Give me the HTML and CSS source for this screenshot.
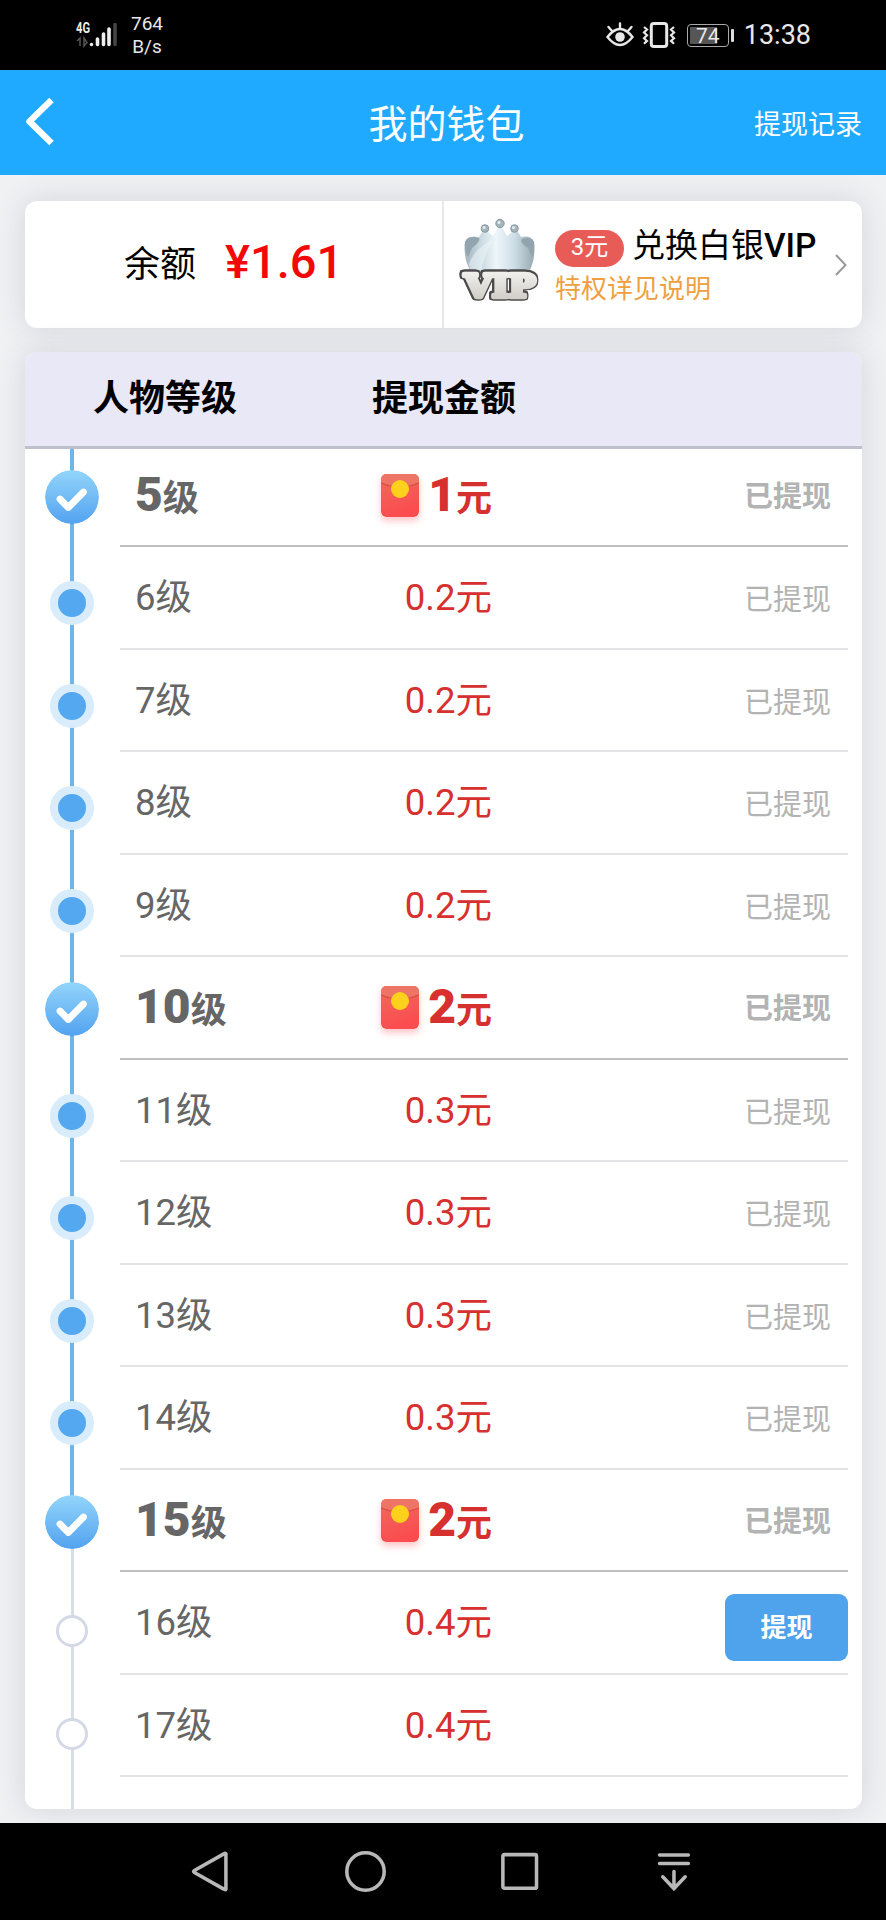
FILE: index.html
```html
<!DOCTYPE html>
<html lang="zh-CN">
<head>
<meta charset="utf-8">
<title>我的钱包</title>
<link rel="stylesheet" href="styles.css">
</head>
<body>
<svg class="defs" width="0" height="0" aria-hidden="true">
  <defs>
    <linearGradient id="badge" x1="0" y1="0" x2="0" y2="1"><stop offset="0" stop-color="#93d5fb"/><stop offset="1" stop-color="#52a2ef"/></linearGradient>
    <linearGradient id="red" x1="0" y1="0" x2="0.3" y2="1"><stop offset="0" stop-color="#ee6c5c"/><stop offset="1" stop-color="#fb4c50"/></linearGradient>
    <linearGradient id="silver" x1="0" y1="0" x2="1" y2="0"><stop offset="0" stop-color="#a3b4bc"/><stop offset=".22" stop-color="#c8d8df"/><stop offset=".45" stop-color="#edf6fa"/><stop offset=".7" stop-color="#cfdfe7"/><stop offset="1" stop-color="#98a8b0"/></linearGradient>
    <linearGradient id="letters" x1="0" y1="0" x2="0" y2="1"><stop offset="0" stop-color="#f6f5f3"/><stop offset="1" stop-color="#cbc7c1"/></linearGradient>
    <symbol id="check" viewBox="0 0 54 54"><circle cx="27" cy="27" r="27" fill="url(#badge)"/><path d="M15 29 23.300 37.500 38.500 22" fill="none" stroke="#fff" stroke-width="6.800" stroke-linecap="round" stroke-linejoin="round"/></symbol>
    <symbol id="packet" viewBox="0 0 38 43"><rect width="38" height="43" rx="5" fill="url(#red)"/><path d="M0 9V5Q0 0 5 0H33Q38 0 38 5V9Q19 17 0 9Z" fill="#ee7565"/><path d="M0 9Q19 17 38 9" fill="none" stroke="#dc5148" stroke-width="1.500"/><circle cx="19" cy="15" r="9" fill="#fdd11b"/></symbol>
  </defs>
</svg>
<div class="phone">
  <div class="status">
    <svg class="signal" width="42" height="28" viewBox="0 0 42 28">
      <text x="0" y="12" class="signal-label" textLength="14" lengthAdjust="spacingAndGlyphs">4G</text>
      <g stroke-width="3.600" stroke-linecap="round" stroke="#eee"><path d="M15.500 23.500v0M21.500 18v5.500M27.500 13v10.500M33 8v15.500"/><path d="M39 3.500v20" stroke="#444"/></g>
      <path d="M1 20l3-3v8M8 17v8l3-3.500z" fill="none" stroke="#555" stroke-width="1.500"/>
    </svg>
    <div class="speed">764<br>B/s</div>
    <div class="status-right">
      <svg width="28" height="26" viewBox="0 0 28 26" fill="none" stroke="#e8e8e8" stroke-width="2.400" stroke-linecap="round"><path d="M1.500 15Q14-1 26.500 15Q14 31 1.500 15Z"/><circle cx="14" cy="15" r="4.800" fill="#e8e8e8" stroke="none"/><path d="M14 6V1.500M6 9 2.500 5M22 9l3.500-4"/></svg>
      <svg class="vibrate" width="34" height="26" viewBox="0 0 34 26" fill="none" stroke="#e8e8e8"><rect x="9.300" y="1.500" width="15.400" height="23" rx="2.500" stroke-width="3"/><path d="M2 5l3 2.500-3 3 3 2.700-3 3 3 2.700-3 2.800M32 5l-3 2.500 3 3-3 2.700 3 3-3 2.700 3 2.800" stroke-width="2.200"/></svg>
      <div class="battery"><span>74</span></div><i class="battery-tip"></i>
      <time>13:38</time>
    </div>
  </div>
  <header class="topbar">
    <svg class="back" width="31" height="50" viewBox="0 0 31 50"><path d="M27.500 3 5.500 24.500 27.500 46" fill="none" stroke="#fff" stroke-width="6.500" stroke-linejoin="round"/></svg>
    <h1>我的钱包</h1>
    <a class="record">提现记录</a>
  </header>
  <main>
    <section class="card summary">
      <div class="balance"><span>余额</span><b>¥1.61</b></div>
      <div class="vip">
        <svg class="crown" width="80" height="88" viewBox="0 0 80 88">
          <path d="M5 25Q8 18 19 20L22 15H28L33 19 38 10H42L47 19 52 15H58L61 20Q71 18 74 25Q76 42 69 55H11Q3 42 5 25Z" fill="url(#silver)"/>
          <path d="M5 25Q8 18 19 21Q21 24 12 31L8 40Q4 34 5 25ZM74 25Q71 19 62 22Q59 25 68 31L72 40Q75 34 74 25Z" fill="#92a4ad"/>
          <path d="M9 47Q14 31 37 20Q24 34 21 55H11Z" fill="#e9f4f8" opacity=".6"/>
          <g fill="#a6b5bc" stroke="#8797a0"><circle cx="25" cy="11.500" r="3.800"/><circle cx="40" cy="6.500" r="4.200"/><circle cx="54.500" cy="11.500" r="3.800"/></g>
          <g fill="#e4edf0"><circle cx="24" cy="10.500" r="1.500"/><circle cx="39" cy="5.500" r="1.600"/><circle cx="53.500" cy="10.500" r="1.500"/></g>
          <text x="4.500" y="80" class="vip-letters" textLength="71" lengthAdjust="spacingAndGlyphs">VIP</text>
        </svg>
        <div class="vip-copy">
          <div class="vip-line"><span class="pill">3元</span><span class="vip-title">兑换白银<b>VIP</b></span></div>
          <div class="vip-note">特权详见说明</div>
        </div>
        <svg class="chevron" width="14" height="24" viewBox="0 0 14 24"><path d="M2 2 11.500 12 2 22" fill="none" stroke="#999" stroke-width="2"/></svg>
      </div>
    </section>
    <section class="card levels">
      <div class="levels-head"><span>人物等级</span><span>提现金额</span></div>
      <div class="list">
        <div class="row big"><div class="rail"><svg class="node"><use href="#check"/></svg></div><div class="cell"><div class="level"><b>5</b>级</div><div class="amount"><svg class="packet"><use href="#packet"/></svg><span><b>1</b>元</span></div><div class="state">已提现</div></div></div>
        <div class="row"><div class="rail"><i class="node"></i></div><div class="cell"><div class="level">6级</div><div class="amount">0.2元</div><div class="state">已提现</div></div></div>
        <div class="row"><div class="rail"><i class="node"></i></div><div class="cell"><div class="level">7级</div><div class="amount">0.2元</div><div class="state">已提现</div></div></div>
        <div class="row"><div class="rail"><i class="node"></i></div><div class="cell"><div class="level">8级</div><div class="amount">0.2元</div><div class="state">已提现</div></div></div>
        <div class="row"><div class="rail"><i class="node"></i></div><div class="cell"><div class="level">9级</div><div class="amount">0.2元</div><div class="state">已提现</div></div></div>
        <div class="row big"><div class="rail"><svg class="node"><use href="#check"/></svg></div><div class="cell"><div class="level"><b>10</b>级</div><div class="amount"><svg class="packet"><use href="#packet"/></svg><span><b>2</b>元</span></div><div class="state">已提现</div></div></div>
        <div class="row"><div class="rail"><i class="node"></i></div><div class="cell"><div class="level">11级</div><div class="amount">0.3元</div><div class="state">已提现</div></div></div>
        <div class="row"><div class="rail"><i class="node"></i></div><div class="cell"><div class="level">12级</div><div class="amount">0.3元</div><div class="state">已提现</div></div></div>
        <div class="row"><div class="rail"><i class="node"></i></div><div class="cell"><div class="level">13级</div><div class="amount">0.3元</div><div class="state">已提现</div></div></div>
        <div class="row"><div class="rail"><i class="node"></i></div><div class="cell"><div class="level">14级</div><div class="amount">0.3元</div><div class="state">已提现</div></div></div>
        <div class="row big last"><div class="rail"><svg class="node"><use href="#check"/></svg></div><div class="cell"><div class="level"><b>15</b>级</div><div class="amount"><svg class="packet"><use href="#packet"/></svg><span><b>2</b>元</span></div><div class="state">已提现</div></div></div>
        <div class="row todo"><div class="rail"><i class="node"></i></div><div class="cell"><div class="level">16级</div><div class="amount">0.4元</div><button class="withdraw">提现</button></div></div>
        <div class="row todo"><div class="rail"><i class="node"></i></div><div class="cell"><div class="level">17级</div><div class="amount">0.4元</div></div></div>
        <div class="row todo tail"><div class="rail"></div></div>
      </div>
    </section>
  </main>
  <nav class="nav">
    <svg viewBox="0 0 44 44"><path d="M35.500 5.500V38.500Q35 39.500 33.500 38.500L6 23Q4.500 22 6 21L33.500 5.500Q35 4.500 35.500 5.500Z"/></svg>
    <svg viewBox="0 0 44 44"><circle cx="22" cy="22" r="17.500"/></svg>
    <svg viewBox="0 0 44 44"><rect x="5.500" y="6.200" width="31.500" height="31.500" rx="1.500"/></svg>
    <svg viewBox="0 0 44 44" stroke-linecap="round"><path d="M8 6.500H35M8 14.500H35M21.500 22V38M11 27l10.500 11L32 27"/></svg>
  </nav>
</div>
</body>
</html>
```

FILE: styles.css
```css
* { box-sizing: border-box; }
body { margin: 0; font-family: Roboto, "Noto Sans CJK SC", sans-serif; }
svg { display: block; flex: none; }
.defs { position: absolute; }
.phone { width: 886px; height: 1920px; overflow: hidden; display: flex; flex-direction: column; background: #f0f1f3; }

.status { height: 70px; flex: none; background: #000; color: #e8e8e8; display: flex; align-items: flex-start; padding-left: 76px; }
.signal { margin-top: 21px; }
.signal-label { font-size: 14px; font-weight: 700; fill: #eee; }
.speed { margin: 13px 0 0 12px; width: 34px; font-size: 19px; line-height: 22.5px; text-align: center; }
.status-right { margin-left: auto; padding: 21px 75px 0 0; display: flex; align-items: center; height: 49px; }
.vibrate { margin-left: 8px; }
.battery { margin-left: 11px; width: 42px; height: 23px; border: 1.500px solid #aaa; border-radius: 4px; padding: 2px; }
.battery span { display: block; height: 17px; line-height: 18px; font-size: 21px; text-align: center; background: linear-gradient(90deg, #555 74%, transparent 74%); }
.battery-tip { width: 3px; height: 13px; margin-left: 2px; background: #ddd; border-radius: 1px; }
.status time { margin-left: 10px; font-size: 27px; }

.topbar { height: 105px; flex: none; background: #20aaff; color: #fff; display: grid; grid-template-columns: 1fr auto 1fr; align-items: center; padding: 0 24px; }
.back { margin-bottom: 1px; }
.topbar h1 { margin: 0; padding: 4px 0 0 7px; font-size: 39px; font-weight: 400; line-height: 56px; }
.record { justify-self: end; padding-top: 4px; font-size: 27px; line-height: 40px; }

main { flex: 1; min-height: 0; padding: 26px 24px 14px 25px; display: flex; flex-direction: column; gap: 24px; }
.card { background: #fff; border-radius: 12px; box-shadow: 0 0 30px rgba(70, 70, 100, .16); }
.summary { height: 127px; display: flex; flex: none; }
.balance { width: 419px; border-right: 2px solid #e8e8eb; padding: 0 0 7px 99px; display: flex; align-items: center; gap: 29px; font-size: 36px; }
.balance b { font-size: 47px; font-weight: 500; color: #f40707; }
.vip { flex: 1; display: flex; align-items: flex-start; padding: 16px 14px 0 16px; }
.crown { overflow: visible; }
.vip-letters { font-family: "DejaVu Serif", serif; font-weight: 700; font-size: 31px; fill: url(#letters); stroke: url(#letters); stroke-width: 4.500px; stroke-linejoin: round; filter: drop-shadow(1.200px 0 0 #4c4a4a) drop-shadow(-1.200px 0 0 #4c4a4a) drop-shadow(0 1.200px 0 #4c4a4a) drop-shadow(0 -1.200px 0 #4c4a4a); }
.vip-copy { margin-left: 15px; }
.vip-line { display: flex; align-items: center; height: 54px; gap: 8px; padding-top: 9px; }
.pill { width: 69px; height: 37px; border-radius: 19px; background: #e85c58; color: #fff; font-size: 24px; line-height: 35px; text-align: center; }
.vip-title { font-size: 33px; line-height: 48px; margin-top: -5px; white-space: nowrap; }
.vip-title b { font-size: 33.5px; font-weight: 500; }
.vip-note { font-size: 26px; line-height: 36px; color: #ef9f40; }
.chevron { margin: 36px 0 0 auto; }

.levels { flex: 1; min-height: 0; overflow: hidden; display: flex; flex-direction: column; }
.levels-head { height: 97px; flex: none; background: #e8e8f7; border-bottom: 3px solid #bec0cb; display: grid; grid-template-columns: 279px 1fr; padding: 20px 0 0 68px; font-size: 36px; font-weight: 700; line-height: 54px; }
.list { flex: 1; min-height: 0; overflow: hidden; }
.row { height: 102.5px; display: flex; }
.row:first-child { margin-top: -4.500px; }
.rail { width: 95px; padding: 34px 0 0 25px; background: linear-gradient(#70b5e7, #70b5e7) 45px 0 / 4px 100% no-repeat; }
.node { display: block; width: 44px; height: 44px; border-radius: 50%; background: #54a8ef; border: 8px solid #d8ecfb; }
.big .rail { padding: 25px 0 0 20px; }
.big .node { width: 54px; height: 54px; border: 0; background: none; }
.last .rail { background: linear-gradient(#70b5e7, #70b5e7) 45px 0 / 4px 50px no-repeat, linear-gradient(#d9dde8, #d9dde8) 46px 0 / 3px 100% no-repeat; }
.todo .rail { background: linear-gradient(#d9dde8, #d9dde8) 46px 0 / 3px 100% no-repeat; padding: 43px 0 0 31px; }
.todo .node { width: 32px; height: 32px; background: #fff; border: 3px solid #d5d9e6; }
.cell { width: 728px; border-bottom: 2px solid #e3e3e5; display: grid; grid-template-columns: 172px 185px 1fr; align-items: start; padding: 24px 0 0 15px; font-size: 36.5px; line-height: 54px; color: #666; }
.big .cell { border-color: #bfbfc2; padding-top: 23px; font-size: 36px; font-weight: 700; }
.level, .amount { height: 54px; white-space: nowrap; }
.amount { display: flex; justify-content: flex-end; color: #d6302f; }
.big b { font-size: 48px; }
.packet { width: 38px; height: 43px; margin: 6px 9px 0 0; border-radius: 5px; box-shadow: 0 4px 7px rgba(250, 90, 90, .35); }
.state { justify-self: end; margin-right: 17px; padding-top: 2px; font-size: 29px; color: #b3b3b3; }
.withdraw { justify-self: end; width: 123px; height: 67px; margin-top: -2px; border: 0; border-radius: 9px; padding: 0 0 5px; background: #4fa2ec; color: #fff; font: 700 26px Roboto, "Noto Sans CJK SC", sans-serif; }
.tail { height: 38px; }

.nav { height: 97px; flex: none; background: #000; display: flex; gap: 107.5px; padding: 25px 0 0 187.5px; }
.nav svg { width: 47px; height: 47px; fill: none; stroke: #b8b8b8; stroke-width: 3.300; }
```
